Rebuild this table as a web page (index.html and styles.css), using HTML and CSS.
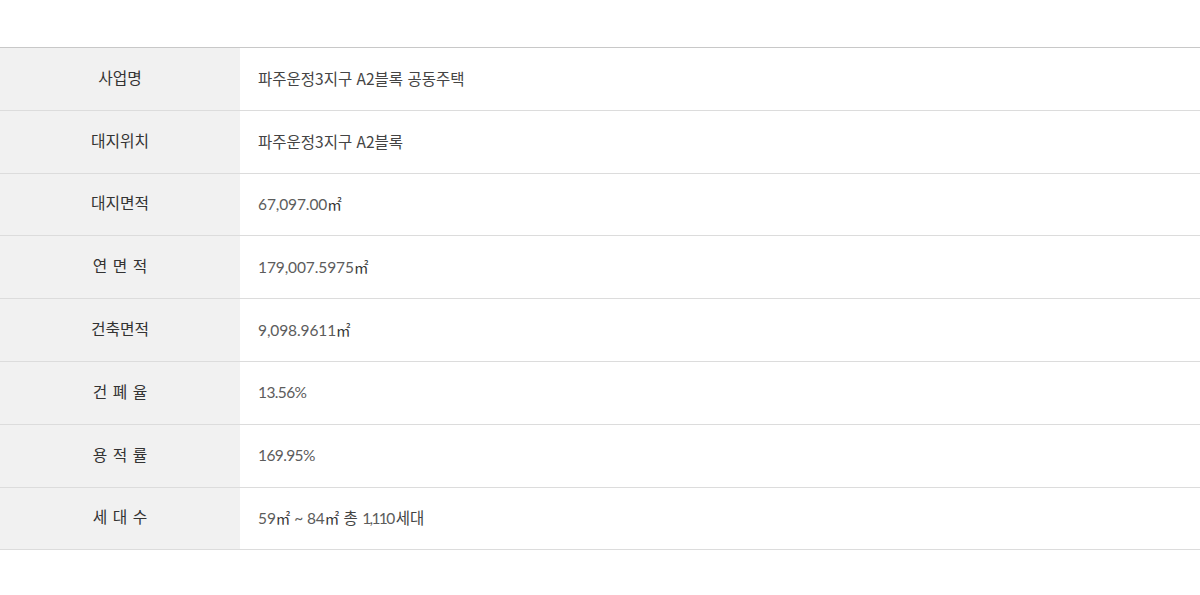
FILE: index.html
```html
<!DOCTYPE html>
<html lang="ko">
<head>
<meta charset="utf-8">
<link rel="stylesheet" href="styles.css">
</head>
<body>
<div class="wrap">
  <table class="info">
    <tbody>
      <tr><th>사업명</th><td>파주운정3지구 A2블록 공동주택</td></tr>
      <tr><th>대지위치</th><td>파주운정3지구 A2블록</td></tr>
      <tr><th>대지면적</th><td><span class="num">67,097.00</span><span class="unit">㎡</span></td></tr>
      <tr><th>연 면 적</th><td><span class="num">179,007.5975</span><span class="unit">㎡</span></td></tr>
      <tr><th>건축면적</th><td><span class="num">9,098.9611</span><span class="unit">㎡</span></td></tr>
      <tr><th>건 폐 율</th><td><span class="num tight">13.56%</span></td></tr>
      <tr><th>용 적 률</th><td><span class="num tight">169.95%</span></td></tr>
      <tr><th>세 대 수</th><td><span class="num">59</span><span class="unit">㎡</span><span class="num"> ~ 84</span><span class="unit">㎡</span> 총 <span class="num tighter">1,110</span>세대</td></tr>
    </tbody>
  </table>
</div>
</body>
</html>
```
FILE: styles.css
```css
html, body {
  margin: 0;
  padding: 0;
  background: #fff;
}
body {
  font-family: "Noto Sans CJK KR", "Noto Sans", sans-serif;
}
.wrap {
  padding-top: 47px;
}
.info {
  width: 100%;
  border-collapse: collapse;
  border-top: 1px solid #c8c8c8;
}
.info tr {
  border-bottom: 1px solid #dcdcdc;
}
.info th {
  width: 240px;
  height: 59.8px;
  padding: 0 0 2px;
  background: #f1f1f1;
  color: #333;
  font-size: 15.8px;
  line-height: 22px;
  font-weight: 400;
  text-align: center;
  vertical-align: middle;
  word-spacing: 1px;
}
.info td {
  height: 59.8px;
  padding: 0 0 2px 18px;
  color: #444;
  font-size: 15.5px;
  line-height: 22px;
  text-align: left;
  vertical-align: middle;
}
.num {
  font-family: "Lato", "Noto Sans", sans-serif;
  color: #5c5c5c;
  font-size: 15.5px;
  letter-spacing: -0.1px;
}
.num.tight {
  letter-spacing: -0.6px;
}
.num.tighter {
  letter-spacing: -1.6px;
  margin-right: 2px;
}
.unit {
  color: #333;
  font-size: 14.5px;
}
```
